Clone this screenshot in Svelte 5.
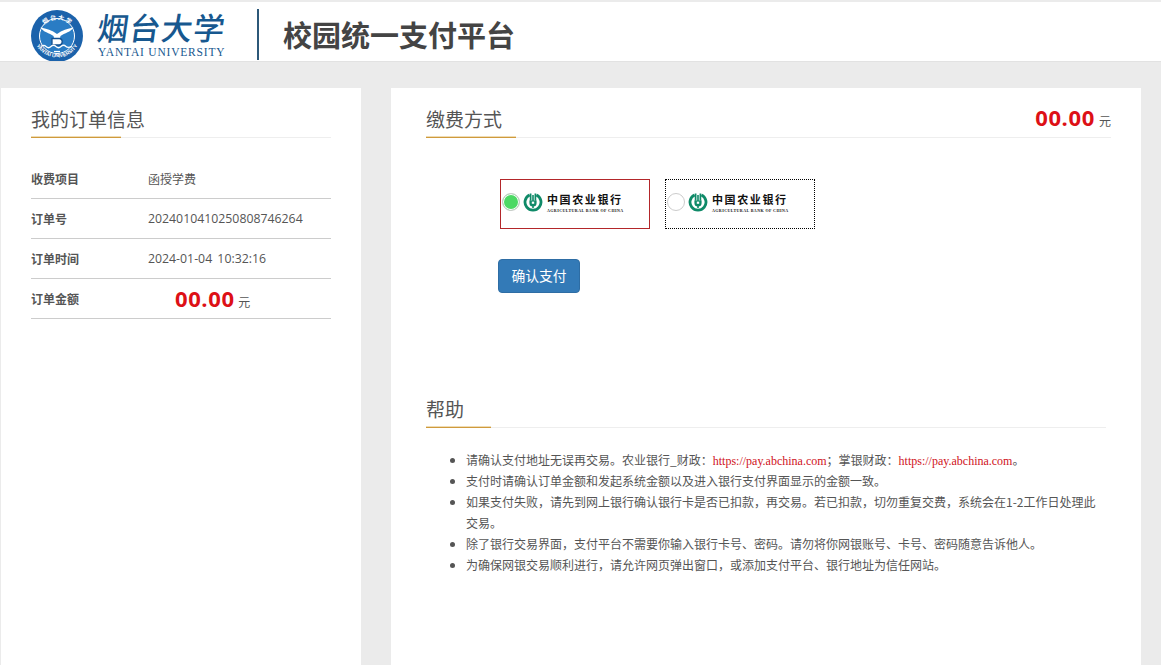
<script lang="ts">
	const orderRows = [
		{ label: '收费项目', value: '函授学费', num: false },
		{ label: '订单号', value: '2024010410250808746264', num: true },
		{ label: '订单时间', value: '2024-01-04 10:32:16', num: true }
	];

	let selected = $state(0);
</script>

{#snippet sectionTitle(text: string)}
	<h2 class="title"><span>{text}</span></h2>
{/snippet}

{#snippet abcLogo()}
	<svg class="abc-mark" viewBox="0 0 20 20" aria-hidden="true">
		<path d="M6.6 2.9a8 8 0 1 0 6.800 0" fill="none" stroke="#0f8a68" stroke-width="2.800" />
		<path d="M7.600 1.500v7.200M12.400 1.500v7.200" stroke="#0f8a68" stroke-width="1.700" fill="none" />
		<path d="M6.400 8.400h7.200v2.600a3.600 3.600 0 0 1-7.200 0z" fill="#0f8a68" />
		<path d="M10 3v13" stroke="#0f8a68" stroke-width="1.600" />
		<path d="M8.800 9.600h2.400v2.200H8.800z" fill="#fff" />
	</svg>
	<span class="abc-text">
		<span class="abc-cn">中国农业银行</span>
		<span class="abc-en">AGRICULTURAL BANK OF CHINA</span>
	</span>
{/snippet}

<div class="page">
	<header class="header">
		<svg class="emblem" viewBox="0 0 52 52" aria-hidden="true">
			<defs>
				<path id="arc-top" d="M7.500 28a18.500 18.500 0 0 1 37 0" />
				<path id="arc-bottom" d="M2.500 24a23.500 23.500 0 0 0 47 0" />
			</defs>
			<circle cx="26" cy="26" r="26" fill="#1b62ab" />
			<circle cx="26" cy="26" r="17.500" fill="#2a7cc4" stroke="#fff" stroke-width="1" />
			<text class="emblem-cn" fill="#fff"><textPath href="#arc-top" startOffset="50%" text-anchor="middle">烟 台 大 学</textPath></text>
			<text class="emblem-en" fill="#fff"><textPath href="#arc-bottom" startOffset="50%" text-anchor="middle">YANTAI UNIVERSITY</textPath></text>
			<path d="M9.500 17.500c6 1 11.500 2.500 16.500 6.500 5-4 10.500-5.500 16.500-6.500-2.500 4.500-9 5.500-13 8.500l-1 4h-5l-1-4c-4-3-10.500-4-13-8.500z" fill="#fff" />
			<path d="M21 28.500h7.500a3.300 3.300 0 0 1 0 6.500H21z" fill="#fff" stroke="#134f8f" stroke-width="1.300" />
			<path d="M10 36.500c2-1.500 3.500-1.500 5 0s3.500 1.500 5 0 3.500-1.500 5 0 3.500 1.500 5 0 3.500-1.500 5 0 3.500 1 6 0" fill="none" stroke="#fff" stroke-width="1.200" />
			<path d="M23 41.500h6" stroke="#fff" stroke-width="1.200" />
		</svg>
		<div class="wordmark">
			<span class="wordmark-cn">烟台大学</span>
			<span class="wordmark-en">YANTAI UNIVERSITY</span>
		</div>
		<div class="divider"></div>
		<h1 class="platform">校园统一支付平台</h1>
	</header>

	<main class="main">
		<section class="card order">
			{@render sectionTitle('我的订单信息')}
			<dl class="rows">
				{#each orderRows as row}
					<div class="row">
						<dt>{row.label}</dt>
						<dd class:num={row.num}>{row.value}</dd>
					</div>
				{/each}
				<div class="row">
					<dt>订单金额</dt>
					<dd class="amount-cell"><b class="amount">00.00</b> <span class="unit">元</span></dd>
				</div>
			</dl>
		</section>

		<section class="card pay">
			<div class="pay-head">
				{@render sectionTitle('缴费方式')}
				<div class="pay-total"><b class="amount">00.00</b> <span class="unit">元</span></div>
			</div>

			<div class="banks" role="radiogroup" aria-label="缴费方式">
				{#each [0, 1] as i}
					<button
						type="button"
						class="bank"
						class:active={selected === i}
						role="radio"
						aria-checked={selected === i}
						onclick={() => (selected = i)}
					>
						<span class="radio"></span>
						{@render abcLogo()}
					</button>
				{/each}
			</div>

			<button type="button" class="confirm">确认支付</button>

			<div class="help">
				{@render sectionTitle('帮助')}
				<ul class="tips">
					<li>请确认支付地址无误再交易。农业银行_财政：<span class="link">https://pay.abchina.com</span>；掌银财政：<span class="link">https://pay.abchina.com</span>。</li>
					<li>支付时请确认订单金额和发起系统金额以及进入银行支付界面显示的金额一致。</li>
					<li>如果支付失败，请先到网上银行确认银行卡是否已扣款，再交易。若已扣款，切勿重复交费，系统会在1-2工作日处理此交易。</li>
					<li>除了银行交易界面，支付平台不需要你输入银行卡号、密码。请勿将你网银账号、卡号、密码随意告诉他人。</li>
					<li>为确保网银交易顺利进行，请允许网页弹出窗口，或添加支付平台、银行地址为信任网站。</li>
				</ul>
			</div>
		</section>
	</main>
</div>

<style>
	:global(body) {
		margin: 0;
		background: #ebebeb;
		font-family: "Open Sans", "Noto Sans CJK SC", sans-serif;
		color: #555;
	}

	.page {
		height: 665px;
		overflow: hidden;
		padding-top: 2px;
		box-sizing: border-box;
	}

	.header {
		display: flex;
		align-items: center;
		height: 60px;
		padding: 5px 0 0 31px;
		background: #fff;
		border-bottom: 1px solid #e2e2e2;
		box-sizing: border-box;
		overflow: hidden;
	}

	.emblem {
		flex: none;
		width: 52px;
		height: 52px;
		margin-top: 3px;
	}

	.emblem-cn {
		font: 700 6px "Noto Sans CJK SC", sans-serif;
	}

	.emblem-en {
		font: 700 5px "Liberation Sans", sans-serif;
	}

	.wordmark {
		display: flex;
		flex-direction: column;
		width: 128px;
		margin-left: 15px;
		color: #17588f;
	}

	.wordmark-cn {
		font: 500 31px/35px "Noto Sans CJK SC", sans-serif;
		letter-spacing: 1px;
		white-space: nowrap;
		transform: skewX(-8deg);
	}

	.wordmark-en {
		font: 11.500px/13px "Liberation Serif", serif;
		letter-spacing: 0.800px;
		white-space: nowrap;
		margin-top: 2px;
	}

	.divider {
		flex: none;
		width: 2px;
		height: 51px;
		margin-left: 31px;
		background: #2c5878;
	}

	.platform {
		margin: 0 0 0 24px;
		font: 700 29px/1 "Noto Sans CJK SC", sans-serif;
		color: #444;
	}

	.main {
		display: flex;
		gap: 30px;
		padding: 26px 0 0 1px;
	}

	.card {
		height: 577px;
		background: #fff;
		box-sizing: border-box;
	}

	.order {
		width: 360px;
		padding: 0 30px;
	}

	.pay {
		position: relative;
		width: 750px;
		padding: 0 30px 0 35px;
	}

	.title {
		margin: 0;
		height: 50px;
		display: flex;
		align-items: flex-end;
		border-bottom: 1px solid #eee;
		box-sizing: border-box;
		font: 400 19px/1 "Noto Sans CJK SC", sans-serif;
		color: #555;
	}

	.title span {
		position: relative;
		padding-bottom: 9px;
	}

	.title span::after {
		content: '';
		position: absolute;
		left: 0;
		bottom: -1px;
		width: 90px;
		height: 2px;
		background: linear-gradient(#efdcb4 50%, #cf9a3c 50%);
	}

	.rows {
		margin: 21px 0 0;
	}

	.row {
		display: flex;
		align-items: center;
		height: 40px;
		border-bottom: 1px solid #ccc;
		box-sizing: border-box;
	}

	dt {
		width: 117px;
		font: 700 12px "Noto Sans CJK SC", sans-serif;
		color: #555;
	}

	dd {
		margin: 0;
		font: 12px "Noto Sans CJK SC", sans-serif;
		color: #555;
	}

	dd.num {
		font: 12.300px "Open Sans", sans-serif;
		word-spacing: 2px;
	}

	.amount-cell {
		padding-left: 27px;
	}

	.amount-cell .unit {
		margin-left: 1px;
	}

	.amount {
		font: 700 22px/1 "Open Sans", sans-serif;
		color: #dd1016;
		letter-spacing: 0.600px;
	}

	.unit {
		font: 12px "Noto Sans CJK SC", sans-serif;
		color: #555;
	}

	.pay-total {
		position: absolute;
		top: 18px;
		right: 30px;
	}

	.banks {
		display: flex;
		gap: 15px;
		margin: 41px 0 0 74px;
	}

	.bank {
		display: flex;
		align-items: center;
		width: 150px;
		height: 50px;
		padding: 0 0 5px 1px;
		background: #fff;
		border: 1px dotted #000;
		box-sizing: border-box;
		cursor: pointer;
	}

	.bank.active {
		border: 1px solid #b3262a;
	}

	.radio {
		flex: none;
		width: 18px;
		height: 18px;
		border: 1px solid #ccc;
		border-radius: 50%;
		box-sizing: border-box;
		background: #fff;
	}

	.bank.active .radio {
		background: #4cd964;
		box-shadow: inset 0 0 0 1px #fff;
	}

	.abc-mark {
		flex: none;
		width: 20px;
		height: 20px;
		margin-left: 3px;
	}

	.abc-text {
		display: flex;
		flex-direction: column;
		margin: 2px 0 0 4px;
		color: #111;
		text-align: left;
	}

	.abc-cn {
		font: 700 11px/13px "Noto Sans CJK SC", sans-serif;
		letter-spacing: 1.600px;
		white-space: nowrap;
	}

	.abc-en {
		font: 700 4px/5px "Liberation Serif", serif;
		letter-spacing: 0.420px;
		white-space: nowrap;
		margin-top: 2px;
	}

	.confirm {
		display: block;
		width: 82px;
		height: 34px;
		margin: 30px 0 0 72px;
		padding: 0 0 2px;
		background: #337ab7;
		border: 1px solid #2e6da4;
		border-radius: 4px;
		color: #fff;
		font: 13.800px "Noto Sans CJK SC", sans-serif;
		cursor: pointer;
	}

	.help {
		width: 680px;
		margin-top: 85px;
	}

	.help .title span::after {
		width: 65px;
	}

	.tips {
		margin: 21px 0 0;
		padding: 0 6px 0 40px;
		font: 12px/21px "Noto Sans CJK SC", sans-serif;
		color: #555;
	}

	.link {
		font-family: "Liberation Serif", serif;
		line-height: 1;
		color: #d0121b;
	}
</style>
